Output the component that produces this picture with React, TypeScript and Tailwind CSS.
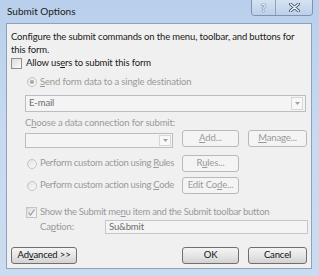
import React from "react";

const font = { fontFamily: 'Lato, "Noto Sans", sans-serif' };

function Radio({ checked }: { checked?: boolean }) {
  return (
    <span className="relative inline-flex h-[10px] w-[10px] shrink-0 items-center justify-center rounded-full border border-[#c6c6c6] bg-gradient-to-br from-[#e2e2e2] to-[#fbfbfb]">
      {checked && <span className="h-[4px] w-[4px] rounded-full bg-[#a8a8a8]" />}
    </span>
  );
}

function Check({ checked, disabled }: { checked?: boolean; disabled?: boolean }) {
  return (
    <span
      className={
        "inline-flex h-[11px] w-[11px] shrink-0 items-center justify-center border bg-gradient-to-br from-[#dcdcdc] to-[#fafafa] " +
        (disabled ? "border-[#c4c4c4]" : "border-[#8f8f8f]")
      }
    >
      {checked && (
        <svg width="9" height="9" viewBox="0 0 9 9">
          <path d="M1.5 4.5 L3.5 7 L7.5 1.5" fill="none" stroke="#9a9a9a" strokeWidth="1.2" />
        </svg>
      )}
    </span>
  );
}

function Btn({ children, w, disabled }: { children: React.ReactNode; w: string; disabled?: boolean }) {
  return (
    <div
      className={
        "flex h-[17px] shrink-0 items-center justify-center rounded-[3px] border text-[9.5px] " +
        w +
        " " +
        (disabled
          ? "border-[#b9b9b9] bg-[#f4f4f4] text-[#9a9a9a]"
          : "border-[#707070] bg-gradient-to-b from-[#f4f4f4] via-[#e6e6e6] to-[#d2d2d2] text-[#111]")
      }
    >
      {children}
    </div>
  );
}

export default function App() {
  return (
    <div
      className="flex h-[276px] w-[319px] flex-col bg-gradient-to-b from-[#b9cfeb] via-[#c7daf0] to-[#cbdcf0]"
      style={font}
    >
      {/* Title bar */}
      <div className="relative flex h-[23px] shrink-0 items-start">
        <div className="pl-[7px] pt-[5px] text-[10px] leading-[13px] text-[#1a1a1a]">Submit Options</div>
        <div className="absolute right-[6px] top-0 flex h-[16px] overflow-hidden rounded-b-[4px] border border-t-0 border-[#7f93b0]">
          <div className="flex w-[24px] items-center justify-center border-r border-[#8ea3c0] bg-gradient-to-b from-[#d5e2f2] to-[#bcd0ea]">
            <span className="text-[11px] font-bold leading-none text-[#f4f8fc] [text-shadow:0_0_1px_#3a4f6d,0_0_1px_#3a4f6d]">?</span>
          </div>
          <div className="flex w-[36px] items-center justify-center bg-gradient-to-b from-[#d5e2f2] to-[#bcd0ea]">
            <svg width="11" height="9" viewBox="0 0 11 9">
              <path d="M1.5 1 L9.5 8 M9.5 1 L1.5 8" stroke="#41546f" strokeWidth="3" strokeLinecap="round" />
              <path d="M1.5 1 L9.5 8 M9.5 1 L1.5 8" stroke="#f4f8fc" strokeWidth="1.4" strokeLinecap="round" />
            </svg>
          </div>
        </div>
      </div>

      {/* Client */}
      <div className="ml-[6px] flex h-[246px] w-[306px] flex-col border border-[#8da2bf] bg-[#f0f0f0] pl-[4px] pr-[4px] text-[9.5px] tracking-[-0.15px] text-[#1a1a1a]">
        <div className="mt-[6px] leading-[13px]">
          Configure the submit commands on the menu, toolbar, and buttons for this form.
        </div>
        <div className="flex h-[14px] items-center gap-[4px]">
          <Check />
          <span>
            Allow us<u>e</u>rs to submit this form
          </span>
        </div>
        <div className="ml-[16px] mt-[5px] flex h-[14px] items-center gap-[3px] text-[#9a9a9a]">
          <Radio checked />
          <span>
            <u>S</u>end form data to a single destination
          </span>
        </div>
        <div className="ml-[14px] mt-[6px] flex h-[17px] w-[281px] items-center justify-between border border-[#b8bec6] bg-[#f4f4f4] pl-[3px] pr-[2px] text-[#6d6d6d]">
          <span>E-mail</span>
          <span className="flex h-[13px] w-[12px] items-center justify-center border border-[#d7d7d7] bg-[#f8f8f8]">
            <svg width="5" height="3" viewBox="0 0 5 3">
              <path d="M0 0 L5 0 L2.5 3 Z" fill="#a0a0a0" />
            </svg>
          </span>
        </div>
        <div className="ml-[14px] mt-[5px] flex h-[13px] items-center text-[#9a9a9a]">
          <span>
            C<u>h</u>oose a data connection for submit:
          </span>
        </div>
        <div className="flex h-[18px] items-start">
          <div className="ml-[14px] mt-[3px] flex h-[15px] w-[148px] shrink-0 items-center justify-end border border-[#b8bec6] bg-[#f4f4f4] pr-[1px]">
            <span className="flex h-[11px] w-[12px] items-center justify-center border border-[#d7d7d7] bg-[#f8f8f8]">
              <svg width="5" height="3" viewBox="0 0 5 3">
                <path d="M0 0 L5 0 L2.5 3 Z" fill="#a0a0a0" />
              </svg>
            </span>
          </div>
          <div className="ml-[9px] flex gap-[9px]">
            <Btn w="w-[57px]" disabled>
              <span>
                <u>A</u>dd...
              </span>
            </Btn>
            <Btn w="w-[59px]" disabled>
              <span>
                <u>M</u>anage...
              </span>
            </Btn>
          </div>
        </div>
        <div className="mt-[7px] flex h-[17px] items-center">
          <div className="ml-[16px] flex w-[155px] shrink-0 items-center gap-[3px] whitespace-nowrap tracking-[-0.3px] text-[#9a9a9a]">
            <Radio />
            <span>
              Perform custom action using <u>R</u>ules
            </span>
          </div>
          <Btn w="w-[57px]" disabled>
            <span>
              R<u>u</u>les...
            </span>
          </Btn>
        </div>
        <div className="mt-[5px] flex h-[17px] items-center">
          <div className="ml-[16px] flex w-[155px] shrink-0 items-center gap-[3px] whitespace-nowrap tracking-[-0.3px] text-[#9a9a9a]">
            <Radio />
            <span>
              Perform custom action using <u>C</u>ode
            </span>
          </div>
          <Btn w="w-[57px]" disabled>
            <span>
              Edit Co<u>d</u>e...
            </span>
          </Btn>
        </div>
        <div className="ml-[15px] mt-[11px] flex h-[14px] items-center gap-[3px] whitespace-nowrap tracking-[-0.3px] text-[#9a9a9a]">
          <Check checked disabled />
          <span>
            Show the Submit me<u>n</u>u item and the Submit toolbar button
          </span>
        </div>
        <div className="mt-[1px] flex h-[14px] items-center">
          <span className="ml-[29px] w-[65px] shrink-0 text-[#9a9a9a]">
            Ca<u>p</u>tion:
          </span>
          <div className="flex h-[14px] w-[203px] shrink-0 items-center border border-[#c2c7cd] bg-[#f4f4f4] pl-[3px] text-[#6d6d6d]">
            Su&amp;bmit
          </div>
        </div>
        <div className="mt-[13px] flex h-[17px] items-center">
          <Btn w="w-[66px]">
            <span>
              Ad<u>v</u>anced &gt;&gt;
            </span>
          </Btn>
          <div className="ml-[105px] flex gap-[9px]">
            <Btn w="w-[57px]">OK</Btn>
            <Btn w="w-[59px]">Cancel</Btn>
          </div>
        </div>
      </div>
    </div>
  );
}
